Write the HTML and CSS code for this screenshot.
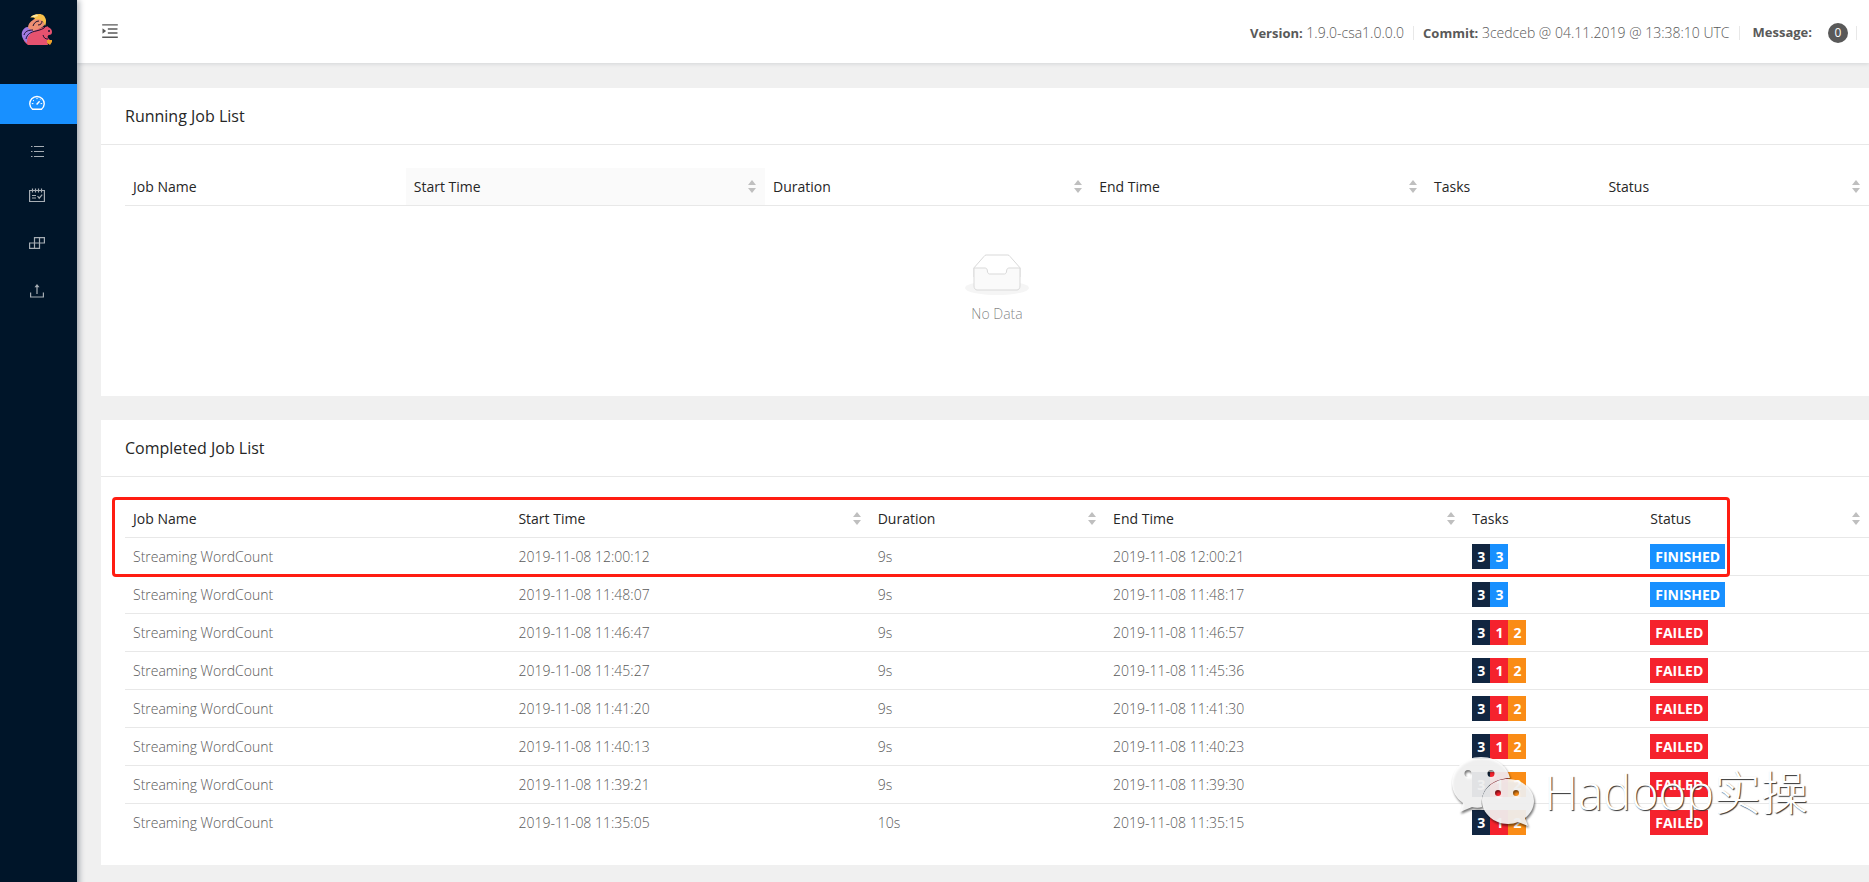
FILE: index.html
```
<!DOCTYPE html>
<html lang="en">

<head>
    <meta charset="UTF-8">
    <title>Apache Flink Web Dashboard</title>
    <link rel="stylesheet" href="styles.css">
</head>

<body>

    <aside class="sidebar">
        <a class="logo" href="#" aria-label="Home">
            <svg width="32" height="32" viewBox="0 0 32 32">
                <path fill="#e6526f" d="M7 31c-3-2-5-5-5-8l10-8 8-1c1-1 3-1 5-1 1-1 2-1 2 0 3 1 4 3 4 5s-1 3-3 3c-1 0-2 2-1 3l2 2-3 1 1 4z" />
                <path fill="#a07ae0" d="M6 29c-4-3-6-7-5-11 1-3 3-5 6-5 3-1 5 1 8 0l2 2c-5 2-7 4-10 8-1 2-1 4-1 6z" />
                <path fill="#ee8f72" d="M7 14c0-4 2-6 5-8 2-2 5-2 8-1l4 5c-2 4-7 5-12 7z" />
                <path fill="#f7c04a" d="M9 4c2-3 6-4 9-4 4 0 6 2 7 6 0 2 0 4-1 6-1-3-2-5-4-6s-4-1-6 0c1-2-3-3-5-2z" />
                <path fill="#fbe6a0" d="M10 3c2-2 5-3 7-2 0 2-4 2-7 2z" />
                <path fill="none" stroke="#1c1030" d="M3 21c1-4 5-5 9-5M5 25c1-5 5-7 10-8 4-1 8-2 10-5M12 12c1-3 3-5 6-5M17 11c3 0 4-2 4-4M22 21c1 3 2 4 5 4" />
                <circle cx="28" cy="17" r="1" fill="#1c1030" />
                <path fill="#eda02b" d="M26 26h5v2l-2 3-3-2z" />
            </svg>
        </a>
        <nav class="menu">
            <a class="menu-item active" href="#" aria-label="Overview">
                <svg width="16" height="16" viewBox="0 0 16 16" fill="none" stroke="currentColor">
                    <path stroke-width="1.4" d="M3.5 14.3a7.2 7.2 0 1 1 9 0z" />
                    <path stroke-width="1.4" d="M7.6 9.4l3-3.2" />
                    <path d="M7.4 3.6h1.200M4 5.200l1 .9M2.800 8.600h1.600M11.600 8.600h1.600M11.300 4.500l.6.6" />
                </svg>
            </a>
            <a class="menu-item" href="#" aria-label="Jobs">
                <svg width="16" height="16" viewBox="0 0 16 16" fill="none" stroke="currentColor">
                    <path d="M5 3.5h10M5 8.5h10M5 13.5h10M2 3.5h1.500M2 8.500h1.500M2 13.500h1.500" />
                </svg>
            </a>
            <a class="menu-item" href="#" aria-label="Task Managers">
                <svg width="16" height="16" viewBox="0 0 16 16" fill="none" stroke="currentColor">
                    <path stroke-width="1.2" d="M.6 3.500h14.800v11H.6zM3.500 1.500v4M6.500 1.500v4M9.500 1.500v4M12.500 1.500v4M3 8.500h4M3 11h4M8.500 9l1.700 2.200 3-3.600" />
                </svg>
            </a>
            <a class="menu-item" href="#" aria-label="Job Manager">
                <svg width="16" height="16" viewBox="0 0 16 16" fill="none" stroke="currentColor">
                    <path stroke-width="1.2" d="M5.500 2.600h9.900v5.400h-9.900zM.6 8h9.900v5.400H.6zM10.500 2.600V8M5.500 8v5.400" />
                </svg>
            </a>
            <a class="menu-item" href="#" aria-label="Submit New Job">
                <svg width="16" height="16" viewBox="0 0 16 16" fill="none" stroke="currentColor">
                    <path stroke-width="1.2" d="M1.600 9.500v4.500h12.800V9.500M8 11V3" />
                    <path fill="currentColor" stroke="none" d="M8 1l2.500 3.200h-5z" />
                </svg>
            </a>
        </nav>
    </aside>

    <div class="main">
        <header class="header">
            <button class="fold" type="button" aria-label="Toggle menu">
                <svg width="20" height="20" viewBox="0 0 1024 1024" fill="currentColor">
                    <path d="M408 442h480c4 0 8-4 8-8v-56c0-4-4-8-8-8H408c-4 0-8 4-8 8v56c0 4 4 8 8 8zm-8 204c0 4 4 8 8 8h480c4 0 8-4 8-8v-56c0-4-4-8-8-8H408c-4 0-8 4-8 8v56zm504-486H120c-4 0-8 4-8 8v56c0 4 4 8 8 8h784c4 0 8-4 8-8v-56c0-4-4-8-8-8zm0 632H120c-4 0-8 4-8 8v56c0 4 4 8 8 8h784c4 0 8-4 8-8v-56c0-4-4-8-8-8zM142 642L299 519a9 9 0 0 0 0-14L142 382c-6-5-14 0-14 7v246a9 9 0 0 0 14 7z" />
                </svg>
            </button>
            <div class="info">
                <span><strong>Version:</strong> 1.9.0-csa1.0.0.0</span>
                <i class="divider"></i>
                <span><strong>Commit:</strong> 3cedceb @ 04.11.2019 @ 13:38:10 UTC</span>
                <i class="divider"></i>
                <span class="message"><strong>Message:</strong> <span class="count">0</span></span>
                <i class="divider"></i>
            </div>
        </header>

        <section class="card running">
            <h2 class="card-title">Running Job List</h2>
            <div class="card-body">
                <table class="jobs">
                    <thead>
                        <tr>
                            <th class="col-name">Job Name</th>
                            <th class="col-start sorted">Start Time<i class="sorter"></i></th>
                            <th class="col-duration">Duration<i class="sorter"></i></th>
                            <th class="col-end">End Time<i class="sorter"></i></th>
                            <th class="col-tasks">Tasks</th>
                            <th class="col-status">Status<i class="sorter"></i></th>
                        </tr>
                    </thead>
                </table>
                <div class="empty">
                    <svg width="64" height="41" viewBox="0 0 64 41">
                        <ellipse fill="#f5f5f5" cx="32" cy="34" rx="32" ry="7" />
                        <g stroke="#d9d9d9" transform="translate(0 1)">
                            <path fill="#fff" d="M55 12.800L44.900 1.300C44.400.5 43.700 0 42.900 0H21.100c-.8 0-1.500.5-2 1.300L9 12.800V22h46z" />
                            <path fill="#fafafa" d="M41.600 16c0-1.700 1-3 2.200-3H55v18c0 2.200-1.300 4-3 4H12c-1.700 0-3-1.800-3-4V13h11.200c1.200 0 2.200 1.300 2.200 3s1 3 2.200 3h14.800c1.200 0 2.200-1.300 2.200-3z" />
                        </g>
                    </svg>
                    <p>No Data</p>
                </div>
            </div>
        </section>

        <section class="card completed">
            <h2 class="card-title">Completed Job List</h2>
            <div class="card-body">
                <table class="jobs">
                    <thead>
                        <tr>
                            <th class="col-name">Job Name</th>
                            <th class="col-start">Start Time<i class="sorter"></i></th>
                            <th class="col-duration">Duration<i class="sorter"></i></th>
                            <th class="col-end">End Time<i class="sorter"></i></th>
                            <th class="col-tasks">Tasks</th>
                            <th class="col-status">Status<i class="sorter"></i></th>
                        </tr>
                    </thead>
                    <tbody>
                        <tr>
                            <td>Streaming WordCount</td>
                            <td>2019-11-08 12:00:12</td>
                            <td>9s</td>
                            <td>2019-11-08 12:00:21</td>
                            <td><div class="tags"><span class="tag total">3</span><span class="tag finished">3</span></div></td>
                            <td><div class="tags"><span class="tag finished">FINISHED</span></div></td>
                        </tr>
                        <tr>
                            <td>Streaming WordCount</td>
                            <td>2019-11-08 11:48:07</td>
                            <td>9s</td>
                            <td>2019-11-08 11:48:17</td>
                            <td><div class="tags"><span class="tag total">3</span><span class="tag finished">3</span></div></td>
                            <td><div class="tags"><span class="tag finished">FINISHED</span></div></td>
                        </tr>
                        <tr>
                            <td>Streaming WordCount</td>
                            <td>2019-11-08 11:46:47</td>
                            <td>9s</td>
                            <td>2019-11-08 11:46:57</td>
                            <td><div class="tags"><span class="tag total">3</span><span class="tag failed">1</span><span class="tag canceled">2</span></div></td>
                            <td><div class="tags"><span class="tag failed">FAILED</span></div></td>
                        </tr>
                        <tr>
                            <td>Streaming WordCount</td>
                            <td>2019-11-08 11:45:27</td>
                            <td>9s</td>
                            <td>2019-11-08 11:45:36</td>
                            <td><div class="tags"><span class="tag total">3</span><span class="tag failed">1</span><span class="tag canceled">2</span></div></td>
                            <td><div class="tags"><span class="tag failed">FAILED</span></div></td>
                        </tr>
                        <tr>
                            <td>Streaming WordCount</td>
                            <td>2019-11-08 11:41:20</td>
                            <td>9s</td>
                            <td>2019-11-08 11:41:30</td>
                            <td><div class="tags"><span class="tag total">3</span><span class="tag failed">1</span><span class="tag canceled">2</span></div></td>
                            <td><div class="tags"><span class="tag failed">FAILED</span></div></td>
                        </tr>
                        <tr>
                            <td>Streaming WordCount</td>
                            <td>2019-11-08 11:40:13</td>
                            <td>9s</td>
                            <td>2019-11-08 11:40:23</td>
                            <td><div class="tags"><span class="tag total">3</span><span class="tag failed">1</span><span class="tag canceled">2</span></div></td>
                            <td><div class="tags"><span class="tag failed">FAILED</span></div></td>
                        </tr>
                        <tr>
                            <td>Streaming WordCount</td>
                            <td>2019-11-08 11:39:21</td>
                            <td>9s</td>
                            <td>2019-11-08 11:39:30</td>
                            <td><div class="tags"><span class="tag total">3</span><span class="tag failed">1</span><span class="tag canceled">2</span></div></td>
                            <td><div class="tags"><span class="tag failed">FAILED</span></div></td>
                        </tr>
                        <tr>
                            <td>Streaming WordCount</td>
                            <td>2019-11-08 11:35:05</td>
                            <td>10s</td>
                            <td>2019-11-08 11:35:15</td>
                            <td><div class="tags"><span class="tag total">3</span><span class="tag failed">1</span><span class="tag canceled">2</span></div></td>
                            <td><div class="tags"><span class="tag failed">FAILED</span></div></td>
                        </tr>
                    </tbody>
                </table>
            </div>
            <div class="highlight"></div>
            <div class="watermark">
                <svg width="84" height="72" viewBox="0 0 84 72">
                    <path class="bubble" fill-rule="evenodd" d="M59 22C56 9 44 1 30 1 14 1 1 12 1 27c0 8 4 15 11 20l-3 9 12-5c4 1 7 1 10 0-2-16 8-28 28-29zM17 14a3.500 3.500 0 1 1 0 7 3.500 3.500 0 0 1 0-7zM40 14a3.500 3.500 0 1 1 0 7 3.500 3.500 0 0 1 0-7z" />
                    <path class="bubble" fill-rule="evenodd" d="M57 23c-14 0-26 10-26 22s12 23 26 23c4 0 7-1 10-2l10 4-3-8c5-4 9-10 9-17 0-12-12-22-26-22zM47 34a3 3 0 1 1 0 6 3 3 0 0 1 0-6zM65 34a3 3 0 1 1 0 6 3 3 0 0 1 0-6z" />
                </svg>
                <span>Hadoop实操</span>
            </div>
        </section>
    </div>

</body>

</html>
```

FILE: styles.css
```
* {
    margin: 0;
    padding: 0;
    box-sizing: border-box;
}

body {
    display: flex;
    min-height: 100vh;
    background: #f0f0f0;
    color: #595959;
    font-family: "Open Sans", "Noto Sans CJK SC", sans-serif;
    font-size: 14px;
    font-weight: 300;
    line-height: 21px;
}

.sidebar {
    flex: none;
    width: 77px;
    background: #001529;
    box-shadow: 2px 0 6px rgba(0, 21, 41, 0.35);
    z-index: 2;
}

.logo {
    display: block;
    height: 84px;
    padding: 14px 0 0 21px;
}

.menu-item {
    display: flex;
    align-items: center;
    height: 40px;
    margin-bottom: 8px;
    padding: 0 0 2px 29px;
    color: #a6adb4;
}

.menu-item:nth-child(2) {
    margin-bottom: 4px;
}

.menu-item.active {
    background: #1890ff;
    color: #fff;
}

.main {
    flex: 1;
    min-width: 0;
}

.header {
    display: flex;
    align-items: center;
    justify-content: space-between;
    height: 63px;
    padding: 2px 12px 0 23px;
    background: #fff;
    box-shadow: 0 1px 4px rgba(0, 21, 41, 0.12);
}

.fold {
    height: 24px;
    padding-bottom: 4px;
    border: 0;
    background: none;
    color: #595959;
}

.fold svg {
    display: block;
}

.info {
    display: flex;
    align-items: center;
}

.info strong {
    font-size: 13px;
    font-weight: 700;
}

.divider {
    width: 1px;
    height: 14px;
    margin: 0 9px;
    background: #e8e8e8;
}

.divider:last-child {
    margin: 0 0 0 8px;
}

.message {
    display: flex;
    align-items: center;
    gap: 16px;
    padding-left: 4px;
}

.count {
    width: 20px;
    height: 20px;
    border-radius: 10px;
    background: #595959;
    color: #fff;
    font-size: 12px;
    font-weight: 400;
    line-height: 20px;
    text-align: center;
}

.card {
    position: relative;
    margin: 25px 0 24px 24px;
    background: #fff;
}

.completed {
    margin-top: 24px;
}

.card-title {
    height: 57px;
    padding: 0 24px;
    border-bottom: 1px solid #e8e8e8;
    color: #262626;
    font-size: 16px;
    font-weight: 500;
    line-height: 57px;
}

.card-body {
    padding: 23px 0 24px 24px;
}

.jobs {
    width: 100%;
    table-layout: fixed;
    border-collapse: separate;
    border-spacing: 0;
}

.jobs th,
.jobs td {
    height: 38px;
    padding: 0 8px;
    border-bottom: 1px solid #e8e8e8;
    text-align: left;
}

.jobs th {
    color: #262626;
    font-weight: 500;
}

.jobs tbody tr:last-child td {
    height: 37px;
    border-bottom: 0;
}

.jobs .sorted {
    background: #fafafa;
}

.running .col-name { width: 16.1%; }
.running .col-start { width: 20.6%; }
.running .col-duration { width: 18.7%; }
.running .col-end { width: 19.2%; }
.running .col-tasks { width: 10%; }

.completed .col-name { width: 22.1%; }
.completed .col-start { width: 20.6%; }
.completed .col-duration { width: 13.5%; }
.completed .col-end { width: 20.6%; }
.completed .col-tasks { width: 10.2%; }

/* up and down carets */
.sorter {
    float: right;
    width: 8px;
    height: 21px;
    margin-right: 1px;
    padding: 4px 0;
}

.sorter::before,
.sorter::after {
    content: "";
    display: block;
    border: 4px solid transparent;
    border-top: 0;
    border-bottom: 5px solid #bfbfbf;
}

.sorter::after {
    margin-top: 3px;
    border-top: 5px solid #bfbfbf;
    border-bottom: 0;
}

.empty {
    padding: 48px 0 48px;
    color: rgba(0, 0, 0, 0.5);
    text-align: center;
}

.empty svg {
    display: block;
    margin: 0 auto 8px;
}

.tags {
    display: flex;
}

.tag {
    padding: 0 5px;
    color: #fff;
    font-weight: 700;
    line-height: 25px;
}

.total { background: #112641; }
.finished { background: #1890ff; }
.failed { background: #f5222d; }
.canceled { background: #fa8c16; }

/* marks the latest finished job */
.highlight {
    position: absolute;
    top: 77px;
    left: 11px;
    right: 139px;
    height: 80px;
    border: 3px solid #ff1d12;
    border-radius: 4px;
}

.watermark {
    position: absolute;
    right: 61px;
    bottom: 37px;
    display: flex;
    align-items: center;
    gap: 9px;
    color: #fff;
    font-size: 47px;
    font-weight: 300;
    line-height: 72px;
    text-shadow: 1px 1px 1px #333;
}

.watermark svg {
    filter: drop-shadow(1px 2px 1px rgba(0, 0, 0, 0.6));
}

.bubble {
    fill: rgba(255, 255, 255, 0.88);
}
```
